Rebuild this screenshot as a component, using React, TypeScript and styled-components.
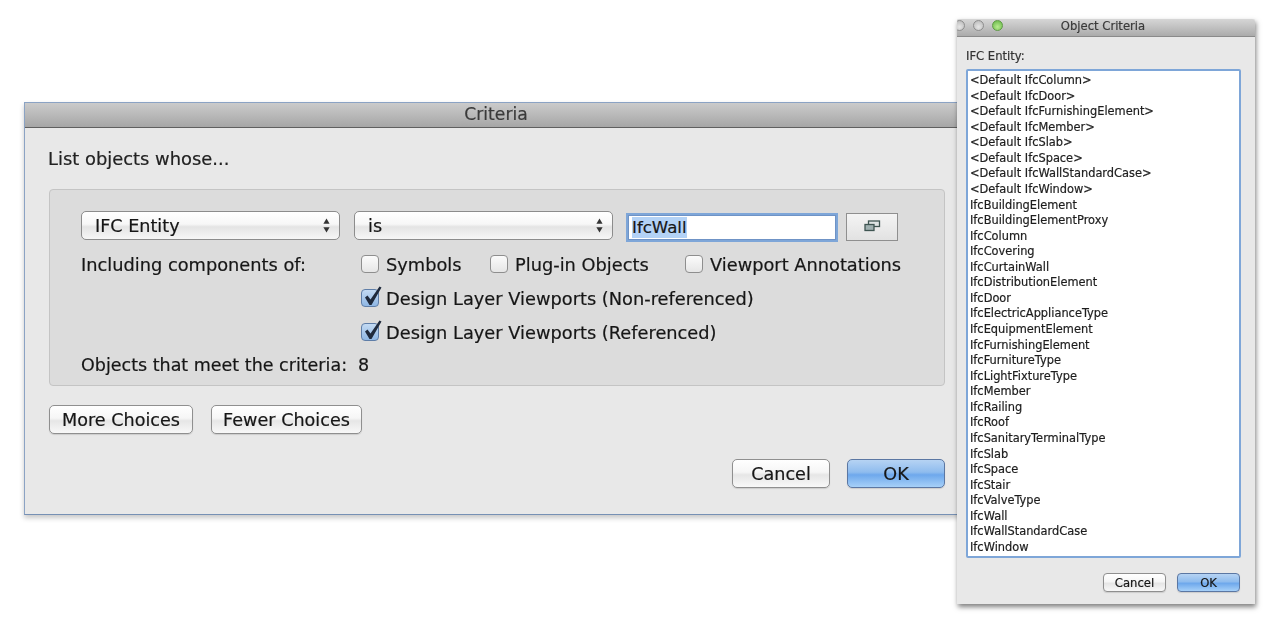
import React from "react";
import styled, { createGlobalStyle } from "styled-components";

const GlobalStyle = createGlobalStyle`
	html, body {
		margin: 0;
		height: 100%;
		background: #ffffff;
		overflow: hidden;
	}
	body {
		font-family: "DejaVu Sans", "Liberation Sans", sans-serif;
		color: #161616;
	}
`;

const Desktop = styled.div`
	position: relative;
	width: 1278px;
	height: 629px;
	overflow: hidden;
	filter: blur(0.45px);
	-webkit-text-stroke: 0.2px;
`;

const MainWindow = styled.div`
	position: absolute;
	left: 24px;
	top: 102px;
	width: 945px;
	height: 413px;
	box-sizing: border-box;
	display: flex;
	flex-direction: column;
	background: #e8e8e8;
	border: 1px solid #8ba3c4;
	border-bottom-color: #7690b4;
	border-right: none;
	box-shadow: 0 3px 5px rgba(0, 0, 0, 0.22);
`;

const TitleBar = styled.div`
	height: 25px;
	flex: none;
	display: flex;
	align-items: center;
	justify-content: center;
	padding: 0 2px 3px 0;
	box-sizing: border-box;
	font-size: 17.2px;
	color: #3a3a3a;
	background: linear-gradient(#cbcbcb, #a6a6a6);
	border-bottom: 1px solid #5f5f5f;
`;

const MainBody = styled.div`
	flex: 1;
	display: flex;
	flex-direction: column;
	padding: 20px 12px 0 24px;
`;

const Heading = styled.div`
	font-size: 17.9px;
	line-height: 22px;
	margin-left: -1px;
	margin-bottom: 19px;
	color: #222;
`;

const Panel = styled.div`
	width: 896px;
	height: 197px;
	box-sizing: border-box;
	display: flex;
	flex-direction: column;
	padding: 21px 0 0 31px;
	background: #dcdcdc;
	border: 1px solid #c4c4c4;
	border-radius: 4px;
`;

const CriteriaRow = styled.div`
	display: flex;
	align-items: flex-start;
	height: 36px;
`;

const Select = styled.div`
	width: 259px;
	height: 29px;
	box-sizing: border-box;
	margin-right: 14px;
	display: flex;
	align-items: center;
	justify-content: space-between;
	padding: 0 9px 0 13px;
	font-size: 17.6px;
	background: linear-gradient(#ffffff 0%, #f7f7f7 45%, #e4e4e4 55%, #f6f6f6 100%);
	border: 1px solid #8c8c8c;
	border-radius: 5px;
`;

const ValueInput = styled.div`
	width: 208px;
	height: 25px;
	box-sizing: border-box;
	margin: 4px 10px 0 1px;
	display: flex;
	align-items: center;
	padding-left: 3px;
	background: #fff;
	border: 1px solid #6f93c6;
	box-shadow: 0 0 0 2px #7ea6d8;
	font-size: 16.6px;
`;

const Selection = styled.span`
	background: #b3d2f6;
	line-height: 21px;
`;

const PickerButton = styled.div`
	width: 52px;
	height: 28px;
	box-sizing: border-box;
	margin-top: 2px;
	display: flex;
	align-items: center;
	justify-content: center;
	padding-bottom: 3px;
	background: linear-gradient(#f4f4f4, #e2e2e2);
	border: 1px solid #8f8f8f;
`;

const OptionRow = styled.div`
	display: flex;
	align-items: center;
	height: 34px;
	font-size: 17.8px;
`;

const OptionLabel = styled.div`
	width: 280px;
	flex: none;
`;

const Option = styled.div<{ $width?: number }>`
	display: flex;
	align-items: center;
	gap: 7px;
	white-space: nowrap;
	${(p) => (p.$width ? `width: ${p.$width}px;` : "")}
`;

const Box = styled.div<{ $checked?: boolean }>`
	position: relative;
	flex: none;
	width: 18px;
	height: 18px;
	box-sizing: border-box;
	border: 1px solid #8e8e8e;
	border-radius: 4px;
	background: ${(p) =>
		p.$checked
			? "linear-gradient(#c3daf3, #8fb7e4)"
			: "linear-gradient(#fbfbfb, #e6e6e6)"};
	${(p) => (p.$checked ? "border-color: #5f7ea8;" : "")}
`;

const Tick = styled.svg`
	position: absolute;
	left: 0;
	top: -6px;
`;

const CountRow = styled(OptionRow)`
	margin-top: -1px;
	gap: 11px;
	font-size: 17.5px;
`;

const ChoiceRow = styled.div`
	display: flex;
	gap: 18px;
	margin-top: 19px;
`;

const Button = styled.div<{ $primary?: boolean; $small?: boolean; $width?: number }>`
	width: ${(p) => p.$width ?? 98}px;
	height: ${(p) => (p.$small ? 19 : 29)}px;
	box-sizing: border-box;
	display: flex;
	align-items: center;
	justify-content: center;
	font-size: ${(p) => (p.$small ? 11.6 : 17.6)}px;
	border: 1px solid ${(p) => (p.$primary ? "#5b77a3" : "#8f8f8f")};
	border-radius: ${(p) => (p.$small ? 4 : 5)}px;
	background: ${(p) =>
		p.$primary
			? "linear-gradient(#b6d3f3 0%, #8fbcee 45%, #6ea8ec 55%, #a6d0f8 100%)"
			: "linear-gradient(#ffffff 0%, #f6f6f6 45%, #e6e6e6 55%, #f8f8f8 100%)"};
	box-shadow: 0 1px 1px rgba(0, 0, 0, 0.12);
`;

const ConfirmRow = styled.div`
	display: flex;
	gap: 17px;
	margin-top: 25px;
	margin-left: 683px;
`;

const SideWindow = styled.div`
	position: absolute;
	left: 957px;
	top: 19px;
	width: 298px;
	height: 585px;
	display: flex;
	flex-direction: column;
	background: #e8e8e8;
	box-shadow: 1px 3px 5px rgba(0, 0, 0, 0.5);
`;

const SideTitleBar = styled.div`
	position: relative;
	height: 18px;
	flex: none;
	box-sizing: border-box;
	display: flex;
	align-items: center;
	justify-content: center;
	padding: 0 6px 4px 0;
	overflow: hidden;
	font-size: 11.6px;
	color: #3a3a3a;
	background: linear-gradient(#d6d6d6, #ababab);
	border-bottom: 1px solid #8a8a8a;
	border-radius: 3px 3px 0 0;
`;

const Lights = styled.div`
	position: absolute;
	left: -3px;
	top: 1px;
	display: flex;
	gap: 8px;
`;

const Light = styled.span<{ $green?: boolean }>`
	width: 11px;
	height: 11px;
	box-sizing: border-box;
	border-radius: 50%;
	border: 1px solid ${(p) => (p.$green ? "#5f9a45" : "#8d8d8d")};
	background: ${(p) =>
		p.$green
			? "radial-gradient(circle at 50% 65%, #b9ec8f, #62b344)"
			: "radial-gradient(circle at 50% 65%, #e6e6e6, #b5b5b5)"};
`;

const SideBody = styled.div`
	flex: 1;
	display: flex;
	flex-direction: column;
	padding: 12px 14px 0 9px;
`;

const SideLabel = styled.div`
	font-size: 11.6px;
	line-height: 14px;
	margin-bottom: 6px;
	color: #333;
`;

const EntityList = styled.div`
	height: 489px;
	box-sizing: border-box;
	padding: 2px 0 0 2px;
	background: #fff;
	border: 2px solid #7ea6d8;
	border-radius: 2px;
`;

const EntityRow = styled.div`
	height: 15.57px;
	line-height: 15.57px;
	font-size: 11.4px;
	white-space: nowrap;
	color: #1d1d1d;
`;

const SideActions = styled.div`
	display: flex;
	justify-content: flex-end;
	gap: 11px;
	margin-top: 15px;
	margin-right: 1px;
`;

const Updown = () => (
	<svg width="7" height="15" viewBox="0 0 7 15" fill="#333">
		<path d="M3.5 0.5 L6.6 5.8 H0.4 Z" />
		<path d="M3.5 14.5 L6.6 9.2 H0.4 Z" />
	</svg>
);

const PickerIcon = () => (
	<svg width="17" height="12" viewBox="0 0 17 12" fill="none" stroke="#3f5552" strokeWidth="1.3">
		<rect x="4.5" y="1" width="11" height="5.5" fill="#dfe4e4" />
		<rect x="1" y="4.5" width="9" height="6" fill="#9fb0b0" />
	</svg>
);

const Check = ({ label, checked, width }: { label: string; checked?: boolean; width?: number }) => (
	<Option $width={width}>
		<Box $checked={checked}>
			{checked && (
				<Tick width="23" height="23" viewBox="0 0 23 23">
					<path d="M3 13.5 L5.5 11.5 L8.5 15.5 L17.5 2.5 L19.5 3.5 L9.5 21 L7.5 21 Z" fill="#1f2a3c" />
				</Tick>
			)}
		</Box>
		{label}
	</Option>
);

const entities = [
	"<Default IfcColumn>",
	"<Default IfcDoor>",
	"<Default IfcFurnishingElement>",
	"<Default IfcMember>",
	"<Default IfcSlab>",
	"<Default IfcSpace>",
	"<Default IfcWallStandardCase>",
	"<Default IfcWindow>",
	"IfcBuildingElement",
	"IfcBuildingElementProxy",
	"IfcColumn",
	"IfcCovering",
	"IfcCurtainWall",
	"IfcDistributionElement",
	"IfcDoor",
	"IfcElectricApplianceType",
	"IfcEquipmentElement",
	"IfcFurnishingElement",
	"IfcFurnitureType",
	"IfcLightFixtureType",
	"IfcMember",
	"IfcRailing",
	"IfcRoof",
	"IfcSanitaryTerminalType",
	"IfcSlab",
	"IfcSpace",
	"IfcStair",
	"IfcValveType",
	"IfcWall",
	"IfcWallStandardCase",
	"IfcWindow",
];

const App = () => {
	return (
		<Desktop>
			<GlobalStyle />
			<MainWindow>
				<TitleBar>Criteria</TitleBar>
				<MainBody>
					<Heading>List objects whose...</Heading>
					<Panel>
						<CriteriaRow>
							<Select>
								IFC Entity
								<Updown />
							</Select>
							<Select>
								is
								<Updown />
							</Select>
							<ValueInput>
								<Selection>IfcWall</Selection>
							</ValueInput>
							<PickerButton>
								<PickerIcon />
							</PickerButton>
						</CriteriaRow>
						<OptionRow>
							<OptionLabel>Including components of:</OptionLabel>
							<Check label="Symbols" width={129} />
							<Check label="Plug-in Objects" width={195} />
							<Check label="Viewport Annotations" />
						</OptionRow>
						<OptionRow>
							<OptionLabel />
							<Check label="Design Layer Viewports (Non-referenced)" checked />
						</OptionRow>
						<OptionRow>
							<OptionLabel />
							<Check label="Design Layer Viewports (Referenced)" checked />
						</OptionRow>
						<CountRow>
							Objects that meet the criteria:
							<span>8</span>
						</CountRow>
					</Panel>
					<ChoiceRow>
						<Button $width={144}>More Choices</Button>
						<Button $width={151}>Fewer Choices</Button>
					</ChoiceRow>
					<ConfirmRow>
						<Button>Cancel</Button>
						<Button $primary>OK</Button>
					</ConfirmRow>
				</MainBody>
			</MainWindow>
			<SideWindow>
				<SideTitleBar>
					<Lights>
						<Light />
						<Light />
						<Light $green />
					</Lights>
					Object Criteria
				</SideTitleBar>
				<SideBody>
					<SideLabel>IFC Entity:</SideLabel>
					<EntityList>
						{entities.map((name) => (
							<EntityRow key={name}>{name}</EntityRow>
						))}
					</EntityList>
					<SideActions>
						<Button $small $width={63}>
							Cancel
						</Button>
						<Button $small $primary $width={63}>
							OK
						</Button>
					</SideActions>
				</SideBody>
			</SideWindow>
		</Desktop>
	);
};

export default App;
